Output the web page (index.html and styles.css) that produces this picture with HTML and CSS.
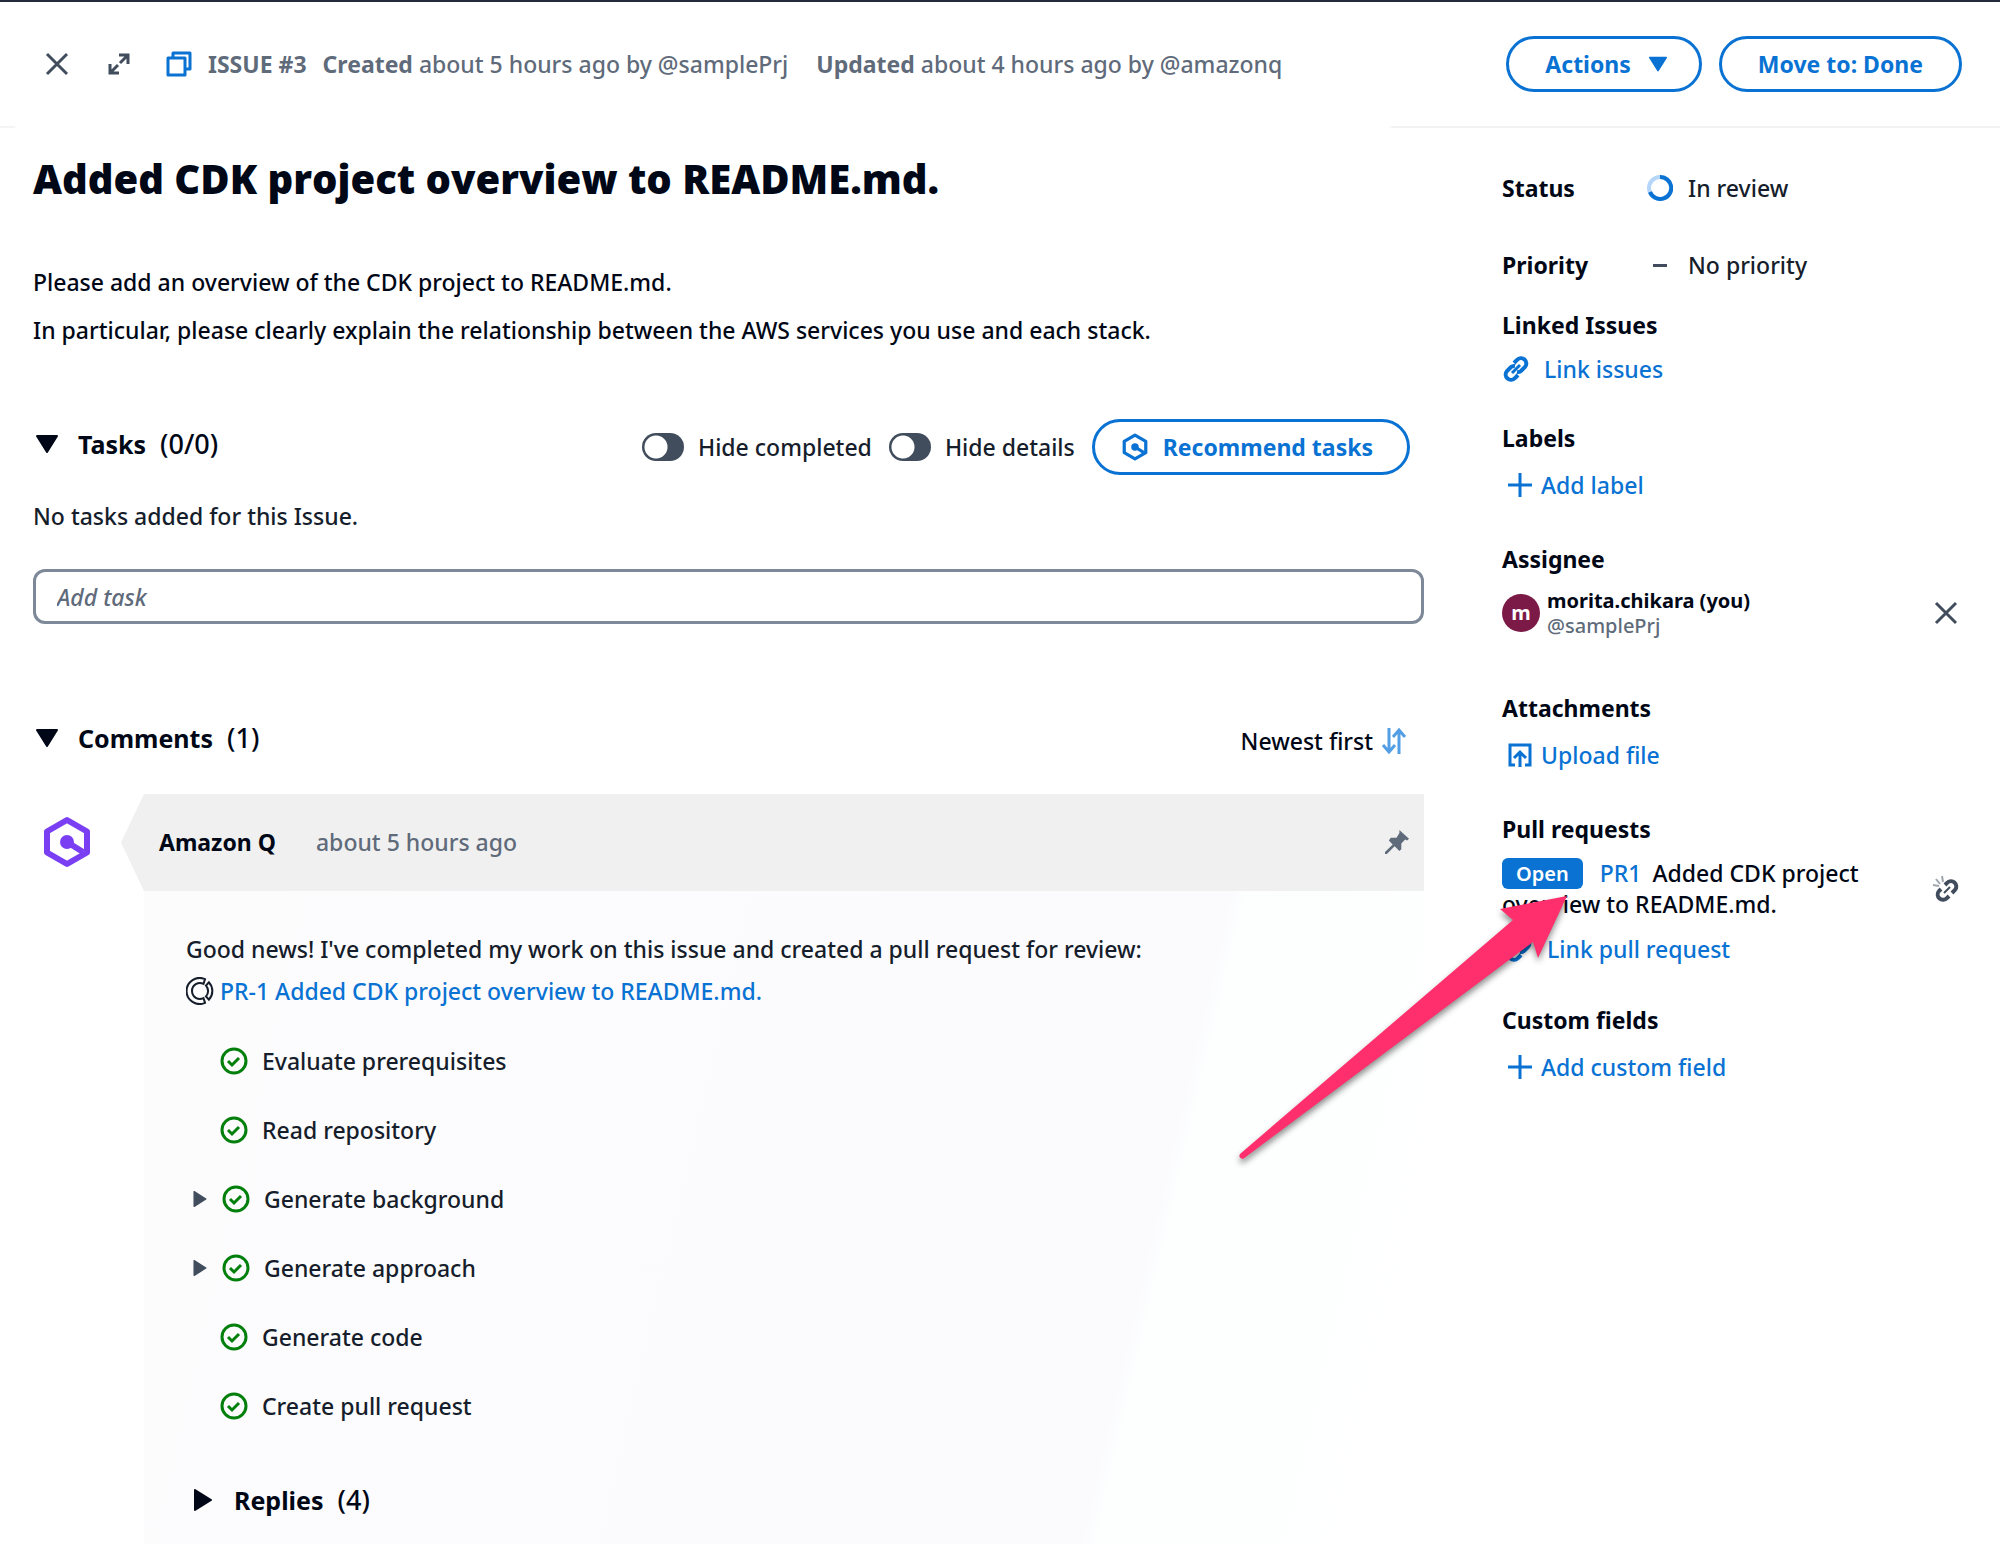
FILE: index.html
```html
<!DOCTYPE html>
<html lang="en">
<head>
<meta charset="utf-8">
<title>Issue #3 - Added CDK project overview to README.md.</title>
<link rel="stylesheet" href="styles.css">
</head>
<body>
<svg class="sprite" aria-hidden="true">
  <symbol id="close" viewBox="0 0 24 24"><path d="M2 2l20 20M22 2L2 22" fill="none" stroke="currentColor" stroke-width="3"/></symbol>
  <symbol id="expand" viewBox="0 0 22 22"><path d="M11 2h9v9M20 2l-8 8M11 20H2v-9M2 20l8-8" fill="none" stroke="currentColor" stroke-width="3"/></symbol>
  <symbol id="copy" viewBox="0 0 26 26"><path d="M2 7h17v17H2zM7 7V2h17v16h-5" fill="none" stroke="currentColor" stroke-width="3" stroke-linejoin="round"/></symbol>
  <symbol id="caret-down" viewBox="0 0 22 20"><path d="M1 2h20L11 18z" fill="currentColor" stroke="currentColor" stroke-width="2" stroke-linejoin="round"/></symbol>
  <symbol id="caret-right" viewBox="0 0 20 22"><path d="M2 1v20l16-10z" fill="currentColor" stroke="currentColor" stroke-width="2" stroke-linejoin="round"/></symbol>
  <symbol id="amazon-q" viewBox="0 0 48 52"><path d="M24 4l20 11.500v21L24 48 4 36.500v-21z" fill="none" stroke="currentColor" stroke-width="6" stroke-linejoin="round"/><circle cx="24" cy="26" r="7" fill="currentColor"/><path d="M24 26l16 10" stroke="currentColor" stroke-width="6"/></symbol>
  <symbol id="link" viewBox="0 0 26 26"><g fill="none" stroke="currentColor" stroke-width="4"><path d="M11 7l3-3a5 5 0 0 1 8 7l-4 4a5 5 0 0 1-4 1"/><path d="M15 19l-3 3a5 5 0 0 1-8-7l4-4a5 5 0 0 1 4-1"/><path d="M9 17l8-8" stroke-width="3"/></g></symbol>
  <symbol id="unlink" viewBox="0 0 28 28"><g fill="none" stroke="currentColor"><path stroke-width="4" d="M13 10l2-2a5 5 0 0 1 8 7l-3 3"/><path stroke-width="4" d="M17 21l-2 2a5 5 0 0 1-8-7l2-2"/><path stroke-width="2" d="M12 18l6-6"/></g><path d="M10 1l1 6M4 4l4 5M1 10l6 1" stroke="currentColor" stroke-width="2" opacity=".5"/></symbol>
  <symbol id="plus" viewBox="0 0 24 24"><path d="M12 0v24M0 12h24" stroke="currentColor" stroke-width="3"/></symbol>
  <symbol id="upload" viewBox="0 0 24 24"><path d="M7 22H2V2h20v20h-5M12 24V9M6 15l6-6 6 6" fill="none" stroke="currentColor" stroke-width="3"/></symbol>
  <symbol id="sort" viewBox="0 0 26 26"><path d="M8 0v24M2 17l6 7 6-7M18 26V2M12 9l6-7 6 7" fill="none" stroke="currentColor" stroke-width="3"/></symbol>
  <symbol id="pin" viewBox="0 0 25 25"><path d="M15 0l10 9-2 2-2-1-4 4v6l-2 2-5-5-8 8-2 0 0-2 8-8-4-4 2-3h6l3-5z" fill="currentColor"/></symbol>
  <symbol id="check" viewBox="0 0 28 28"><circle cx="14" cy="14" r="12" fill="none" stroke="currentColor" stroke-width="3"/><path d="M8 14l4 4 7-7" fill="none" stroke="currentColor" stroke-width="3"/></symbol>
  <symbol id="progress" viewBox="0 0 26 26"><circle cx="13" cy="13" r="11" fill="none" stroke="#b5d6f8" stroke-width="4"/><path d="M13 2a11 11 0 1 1-10 15" fill="none" stroke="#0972d3" stroke-width="4"/></symbol>
  <symbol id="pr-ring" viewBox="0 0 28 28"><g fill="none" stroke="currentColor" stroke-width="2"><path d="M19 2.200A13 13 0 1 0 19 25.800L17.500 21.200A8 8 0 1 1 17.500 6.800z"/><path d="M23 5.300a13 13 0 0 1 0 17.400l-3-3.300a8 8 0 0 0 0-10.800z"/></g></symbol>
</svg>
<div class="page">
  <header class="topbar">
    <div class="topbar-info">
      <button class="icon-button" aria-label="Close"><svg class="i24"><use href="#close"/></svg></button>
      <button class="icon-button" aria-label="Expand"><svg class="i22"><use href="#expand"/></svg></button>
      <div class="meta">
        <button class="icon-button copy" aria-label="Copy issue link"><svg class="i26"><use href="#copy"/></svg></button>
        <strong>ISSUE #3</strong>
        <span><strong>Created</strong> about 5 hours ago by @samplePrj</span>
        <span class="updated"><strong>Updated</strong> about 4 hours ago by @amazonq</span>
      </div>
    </div>
    <div class="topbar-actions">
      <button class="pill actions">Actions <svg class="i18"><use href="#caret-down"/></svg></button>
      <button class="pill">Move to: Done</button>
    </div>
  </header>

  <div class="layout">
    <main class="issue">
      <h1>Added CDK project overview to README.md.</h1>
      <div class="description">
        <p>Please add an overview of the CDK project to README.md.</p>
        <p>In particular, please clearly explain the relationship between the AWS services you use and each stack.</p>
      </div>

      <section class="tasks">
        <div class="section-bar">
          <h2><button class="toggle-head" aria-expanded="true"><svg class="i22"><use href="#caret-down"/></svg>Tasks <span class="count">(0/0)</span></button></h2>
          <div class="task-tools">
            <label class="switch"><input type="checkbox">Hide completed</label>
            <label class="switch"><input type="checkbox">Hide details</label>
            <button class="pill recommend"><svg class="i28"><use href="#amazon-q"/></svg>Recommend tasks</button>
          </div>
        </div>
        <p class="empty">No tasks added for this Issue.</p>
        <input class="task-input" type="text" placeholder="Add task" aria-label="Add task">
      </section>

      <section class="comments">
        <div class="section-bar">
          <h2><button class="toggle-head" aria-expanded="true"><svg class="i22"><use href="#caret-down"/></svg>Comments <span class="count">(1)</span></button></h2>
          <button class="sort">Newest first <svg class="i26"><use href="#sort"/></svg></button>
        </div>
        <article class="comment">
          <svg class="avatar-q"><use href="#amazon-q"/></svg>
          <div class="comment-main">
            <div class="comment-head">
              <strong>Amazon Q</strong>
              <span class="time">about 5 hours ago</span>
              <button class="icon-button pin" aria-label="Pin comment"><svg class="i24"><use href="#pin"/></svg></button>
            </div>
            <div class="comment-body">
              <p>Good news! I've completed my work on this issue and created a pull request for review:</p>
              <p class="pr-line"><svg class="i28"><use href="#pr-ring"/></svg><a href="#">PR-1 Added CDK project overview to README.md.</a></p>
              <ul class="steps">
                <li><svg class="i28"><use href="#check"/></svg>Evaluate prerequisites</li>
                <li><svg class="i28"><use href="#check"/></svg>Read repository</li>
                <li class="expandable"><button class="icon-button" aria-label="Show background"><svg class="i16"><use href="#caret-right"/></svg></button><svg class="i28"><use href="#check"/></svg>Generate background</li>
                <li class="expandable"><button class="icon-button" aria-label="Show approach"><svg class="i16"><use href="#caret-right"/></svg></button><svg class="i28"><use href="#check"/></svg>Generate approach</li>
                <li><svg class="i28"><use href="#check"/></svg>Generate code</li>
                <li><svg class="i28"><use href="#check"/></svg>Create pull request</li>
              </ul>
              <h3><button class="toggle-head replies" aria-expanded="false"><svg class="i22"><use href="#caret-right"/></svg>Replies <span class="count">(4)</span></button></h3>
            </div>
          </div>
        </article>
      </section>
    </main>

    <aside class="details">
      <dl class="fields">
        <div class="field"><dt>Status</dt><dd><svg class="i26"><use href="#progress"/></svg>In review</dd></div>
        <div class="field"><dt>Priority</dt><dd><span class="dash"></span>No priority</dd></div>
      </dl>
      <section class="linked">
        <h2>Linked Issues</h2>
        <a class="action wide" href="#"><svg class="i26"><use href="#link"/></svg>Link issues</a>
      </section>
      <section class="labels">
        <h2>Labels</h2>
        <a class="action" href="#"><svg class="i24"><use href="#plus"/></svg>Add label</a>
      </section>
      <section class="assignee">
        <h2>Assignee</h2>
        <div class="person">
          <span class="avatar">m</span>
          <div class="person-name"><strong>morita.chikara (you)</strong><span>@samplePrj</span></div>
          <button class="icon-button" aria-label="Remove assignee"><svg class="i24"><use href="#close"/></svg></button>
        </div>
      </section>
      <section class="attachments">
        <h2>Attachments</h2>
        <a class="action" href="#"><svg class="i24"><use href="#upload"/></svg>Upload file</a>
      </section>
      <section class="pulls">
        <h2>Pull requests</h2>
        <div class="pull">
          <p><span class="badge">Open</span><a href="#">PR1</a> Added CDK project overview to README.md.</p>
          <button class="icon-button" aria-label="Unlink pull request"><svg class="i28"><use href="#unlink"/></svg></button>
        </div>
        <a class="action inset" href="#"><svg class="i26"><use href="#link"/></svg>Link pull request</a>
        <svg class="pointer" viewBox="0 0 340 280" aria-hidden="true"><path d="M337 15L270 28l13 11L10 273q-2 4 3 5L303 61l5 16z"/></svg>
      </section>
      <section class="custom">
        <h2>Custom fields</h2>
        <a class="action" href="#"><svg class="i24"><use href="#plus"/></svg>Add custom field</a>
      </section>
    </aside>
  </div>
</div>
</body>
</html>
```
FILE: styles.css
```css
:root {
  --blue: #0972d3;
  --ink: #000716;
  --text: #161d2b;
  --gray: #5f6b7a;
  --dark: #414d5c;
}
* { box-sizing: border-box; margin: 0; padding: 0; }
body {
  background: #fff;
  color: var(--ink);
  font: 500 23px/30px "Noto Sans", "Open Sans", sans-serif;
}
button, input { font: inherit; color: inherit; background: none; border: 0; }
button { cursor: pointer; }
a { color: var(--blue); text-decoration: none; }
strong, h2, h3, dt { font-weight: 700; }
h2, h3 { font-size: inherit; }
ul { list-style: none; }
svg { flex: none; display: block; }
.sprite { position: absolute; width: 0; height: 0; }
.i16 { width: 16px; height: 16px; }
.i18 { width: 18px; height: 18px; }
.i22 { width: 22px; height: 22px; }
.i24 { width: 24px; height: 24px; }
.i26 { width: 26px; height: 26px; }
.i28 { width: 28px; height: 28px; }
.icon-button { display: flex; align-items: center; justify-content: center; color: var(--dark); }

.page { min-height: 100vh; display: flex; flex-direction: column; border-top: 2px solid #232b3c; }

/* top bar */
.topbar {
  display: flex;
  align-items: center;
  justify-content: space-between;
  height: 126px;
  padding: 0 38px 0 45px;
  border-bottom: 2px solid;
  border-image: linear-gradient(to right, #f4f4f4 14px, transparent 18px, transparent calc(100% - 612px), #f2f3f3 calc(100% - 608px)) 1;
}
.topbar-info, .meta, .topbar-actions { display: flex; align-items: center; }
.topbar-info { gap: 39px; color: var(--gray); }
.meta { gap: 16px; margin-left: -3px; white-space: nowrap; }
.meta .copy { color: var(--blue); }
.updated { margin-left: 12px; }
.topbar-actions { gap: 17px; }
.pill {
  display: flex;
  align-items: center;
  height: 56px;
  padding: 0 36px;
  border: 3px solid var(--blue);
  border-radius: 28px;
  color: var(--blue);
  font-weight: 700;
  white-space: nowrap;
}
.actions { gap: 18px; padding-right: 32px; }
.recommend { gap: 14px; padding: 0 34px 0 26px; }

/* columns */
.layout {
  flex: 1;
  display: grid;
  grid-template-columns: minmax(0, 1fr) 460px;
  column-gap: 78px;
  padding: 0 38px 0 33px;
}
.issue { display: flex; flex-direction: column; padding-top: 23px; }
h1 { font: 800 40px/56px "Open Sans", "Noto Sans", sans-serif; }
.description { margin-top: 51px; line-height: 48px; }
.section-bar { display: flex; align-items: center; justify-content: space-between; height: 56px; }
.section-bar h2 { padding-bottom: 6px; }
.toggle-head { display: flex; align-items: center; gap: 20px; padding-left: 3px; font-size: 25px; font-weight: 700; }
.count { margin-left: -6px; font-size: 27px; font-weight: 500; }
.tasks { margin-top: 65px; }
.task-tools { display: flex; align-items: center; gap: 17px; margin-right: 14px; color: var(--text); }
.switch { display: flex; align-items: center; gap: 14px; white-space: nowrap; }
.switch input {
  appearance: none;
  width: 42px;
  height: 28px;
  border-radius: 14px;
  background: radial-gradient(circle at 14px 14px, #fff 11px, transparent 12px) var(--dark);
}
.empty { margin-top: 26px; color: var(--text); }
.task-input {
  display: block;
  width: 100%;
  height: 55px;
  margin-top: 38px;
  padding: 0 21px;
  border: 3px solid #7d8998;
  border-radius: 12px;
}
.task-input::placeholder { color: var(--gray); font-style: italic; opacity: 1; }

/* comments */
.comments { flex: 1; display: flex; flex-direction: column; margin-top: 89px; }
.sort { display: flex; align-items: center; gap: 8px; margin-right: 17px; }
.sort svg { color: #539fe5; }
.comment { flex: 1; display: flex; gap: 30px; margin-top: 25px; }
.avatar-q { width: 48px; height: 52px; margin: 22px 0 0 10px; color: #7a3ff2; }
.comment-main { flex: 1; display: flex; flex-direction: column; }
.comment-head {
  display: flex;
  align-items: center;
  gap: 40px;
  height: 97px;
  padding: 0 15px 2px 38px;
  background: #f0f0f0;
  clip-path: polygon(23px 0, 100% 0, 100% 100%, 23px 100%, 0 50%);
}
.time { color: var(--gray); }
.pin { margin-left: auto; color: var(--gray); }
.comment-body {
  flex: 1;
  margin-left: 23px;
  padding: 37px 42px 24px;
  background: linear-gradient(103deg, #fcfcfd, #fbfbfe 76%, #fdfefe 77%, #fff);
  color: var(--text);
  line-height: 42px;
}
.pr-line { display: flex; align-items: center; gap: 6px; }
.steps { margin-top: 14px; }
.steps li { display: flex; align-items: center; gap: 14px; height: 69px; padding-left: 34px; }
.steps .expandable { padding-left: 6px; }
.steps li > svg { color: #037f0c; }
.replies { padding-left: 6px; color: var(--ink); }
h3 { margin-top: 39px; }

/* details */
.details { padding-top: 45px; }
.fields { display: grid; row-gap: 47px; }
.field { display: flex; align-items: center; }
.field dt { width: 145px; }
.field dd { display: flex; align-items: center; gap: 15px; color: var(--text); }
.dash { width: 14px; height: 3px; margin: 0 6px; background: var(--dark); }
.details section { margin-top: 44px; }
.details .linked { margin-top: 30px; }
.details .labels { margin-top: 39px; }
.details .attachments { margin-top: 55px; }
.details .custom { margin-top: 41px; }
.action { display: flex; align-items: center; gap: 9px; margin-top: 17px; padding-left: 6px; }
.action.wide { gap: 15px; margin-top: 14px; padding-left: 1px; }
.action.inset { gap: 15px; margin-top: 14px; padding-left: 4px; }
.person { display: flex; align-items: center; gap: 7px; margin-top: 14px; padding-right: 4px; }
.person .icon-button, .pull .icon-button { margin-left: auto; }
.avatar {
  display: grid;
  place-items: center;
  width: 38px;
  height: 38px;
  border-radius: 50%;
  background: #7b1a47;
  color: #fff;
  font-size: 20px;
  font-weight: 700;
}
.person-name { display: grid; font-size: 20px; line-height: 25px; }
.person-name span { color: var(--gray); }
.pulls { position: relative; }
.pull { display: flex; align-items: center; margin-top: 14px; padding-right: 2px; line-height: 31px; }
.pull p { width: 380px; }
.pull a { margin-right: 5px; }
.badge {
  display: inline-block;
  height: 31px;
  margin-right: 17px;
  padding: 0 14px;
  border-radius: 6px;
  background: var(--blue);
  color: #fff;
  font-size: 20px;
  font-weight: 600;
  vertical-align: top;
}
/* callout arrow lying over the pull request link */
.pointer {
  position: absolute;
  top: 67px;
  left: -272px;
  width: 340px;
  height: 280px;
  fill: #ff2e6c;
  filter: drop-shadow(0 4px 3px rgb(0 0 0 / 45%));
}
```
